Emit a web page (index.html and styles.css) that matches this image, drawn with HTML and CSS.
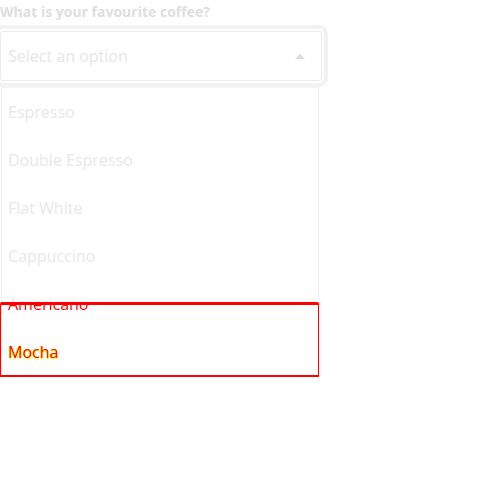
FILE: index.html
```html
<!DOCTYPE html>
<html>
<head>
<meta charset="utf-8">
<link rel="stylesheet" href="styles.css">
</head>
<body>
<div class="field">
  <div class="label">What is your favourite coffee?</div>
  <div class="control">
    <span class="placeholder">Select an option</span>
    <span class="arrow"></span>
  </div>
  <ul class="menu">
    <li class="item">Espresso</li>
    <li class="item">Double Espresso</li>
    <li class="item">Flat White</li>
    <li class="item">Cappuccino</li>
    <li class="item"><span class="split">Americano</span></li>
    <li class="item"><span class="hi">Mocha</span></li>
    <div class="mark"></div>
  </ul>
</div>
</body>
</html>
```
FILE: styles.css
```css
html, body {
  margin: 0;
  padding: 0;
  background: #fff;
  font-family: "Open Sans", "Liberation Sans", sans-serif;
}
.field {
  width: 322px;
}
.label {
  font-size: 14px;
  font-weight: 700;
  color: #dedede;
  line-height: 24px;
  height: 24px;
}
.control {
  margin-top: 7px;
  height: 48px;
  border: 1px solid #ebebeb;
  border-radius: 3px;
  box-shadow: 0 0 0 2px #fff, 0 0 0 6px #f2f2f2;
  display: flex;
  align-items: center;
  justify-content: space-between;
  padding: 0 0 0 7px;
}
.placeholder {
  font-size: 16px;
  color: #e6e6e6;
}
.arrow {
  width: 0;
  height: 0;
  border-left: 5px solid transparent;
  border-right: 5px solid transparent;
  border-bottom: 5px solid #dcdcdc;
  margin-right: 16px;
}
.menu {
  position: relative;
  list-style: none;
  margin: 6px 0 0 1px;
  padding: 0;
  width: 316px;
  border: 1px solid #f0f0f0;
  border-top-color: #f4f4f4;
}
.item {
  height: 48px;
  line-height: 48px;
  padding-left: 6px;
  font-size: 16px;
  color: #e8e8e8;
}
.split {
  background: linear-gradient(to bottom, #e8e8e8 0, #e8e8e8 50%, #ff0000 50%);
  -webkit-background-clip: text;
  background-clip: text;
  color: transparent;
}
.hi {
  color: #ff0000;
  text-shadow: 0.5px 0.5px 0 #ffff00, -0.5px -0.5px 0 #ffff00;
}
.mark {
  position: absolute;
  left: -2px;
  right: -1px;
  top: 214px;
  bottom: -2px;
  border: 1px solid #ff0000;
  border-top-width: 3px;
  border-bottom-width: 3px;
  border-radius: 2px;
  pointer-events: none;
}
```
